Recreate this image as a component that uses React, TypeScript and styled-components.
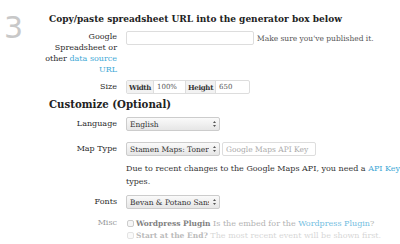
import React from "react";
import styled, { createGlobalStyle } from "styled-components";

const Global = createGlobalStyle`
  html, body {
    margin: 0;
    padding: 0;
    background: #fff;
  }
  body {
    font-family: "DejaVu Serif", "Liberation Serif", serif;
    color: #333;
    font-size: 8px;
  }
`;

const Page = styled.div`
  width: 400px;
  height: 244px;
  overflow: hidden;
  display: flex;
  padding-top: 13px;
  box-sizing: border-box;
`;

const StepNumber = styled.div`
  width: 49px;
  padding-left: 4px;
  box-sizing: border-box;
  font-family: "DejaVu Sans", "Liberation Sans", sans-serif;
  font-size: 30px;
  line-height: 30px;
  color: #c8c8c8;
  flex-shrink: 0;
`;

const Content = styled.div`
  flex: 1;
  display: flex;
  flex-direction: column;
  white-space: nowrap;
`;

const Heading = styled.h2<{ $size?: number; $mt?: number }>`
  margin: ${(p) => p.$mt ?? 0}px 0 0;
  font-size: ${(p) => p.$size ?? 9}px;
  line-height: 12px;
  font-weight: bold;
  color: #222;
`;

const Row = styled.div<{ $mt?: number }>`
  display: flex;
  align-items: flex-start;
  gap: 9px;
  margin-top: ${(p) => p.$mt ?? 0}px;
`;

const Label = styled.div<{ $muted?: boolean; $pt?: number }>`
  width: 80px;
  margin-left: -12px;
  flex-shrink: 0;
  text-align: right;
  line-height: 11px;
  white-space: normal;
  padding-top: ${(p) => p.$pt ?? 0}px;
  color: ${(p) => (p.$muted ? "#999" : "#2a2a2a")};
`;

const Field = styled.div`
  display: flex;
  align-items: center;
  gap: 2px;
`;

const TextInput = styled.input<{ $w: number }>`
  width: ${(p) => p.$w}px;
  height: 14px;
  box-sizing: border-box;
  border: 1px solid #ddd;
  border-radius: 2px;
  padding: 0 3px;
  font: inherit;
  font-size: 7.5px;
  color: #333;
  background: #fff;
  outline: none;
  &::placeholder {
    color: #aaa;
  }
`;

const Hint = styled.span`
  font-size: 7.5px;
  color: #555;
  margin-left: 1px;
`;

const Link = styled.a`
  color: #3fa9d6;
  text-decoration: none;
`;

const Group = styled.div`
  display: flex;
  height: 14px;
  border: 1px solid #ddd;
  border-radius: 2px;
  box-sizing: border-box;
  overflow: hidden;
`;

const GroupLabel = styled.span<{ $w: number }>`
  display: flex;
  align-items: center;
  justify-content: center;
  width: ${(p) => p.$w}px;
  box-sizing: border-box;
  background: #f2f2f2;
  border-right: 1px solid #ddd;
  font-weight: bold;
  font-size: 7px;
  letter-spacing: -0.3px;
  color: #333;
`;

const GroupValue = styled.span<{ $w: number; $border?: boolean }>`
  display: flex;
  align-items: center;
  width: ${(p) => p.$w}px;
  padding: 0 3px;
  font-size: 7px;
  box-sizing: border-box;
  color: #555;
  border-right: ${(p) => (p.$border ? "1px solid #ddd" : "none")};
`;

const SelectBox = styled.div`
  position: relative;
  width: 94px;
  height: 14px;
`;

const Select = styled.select`
  appearance: none;
  -webkit-appearance: none;
  width: 100%;
  height: 100%;
  box-sizing: border-box;
  border: 1px solid #ccc;
  border-radius: 2px;
  padding: 0 10px 0 3px;
  font: inherit;
  font-size: 7.5px;
  color: #333;
  background: linear-gradient(#fafafa, #e6e6e6);
  outline: none;
`;

const Arrows = styled.svg`
  position: absolute;
  right: 4px;
  top: 4px;
  pointer-events: none;
`;

const Note = styled.div`
  line-height: 13px;
  white-space: normal;
  width: 390px;
  font-size: 8px;
  color: #333;
  margin-top: -1px;
`;

const Faint = styled.span`
  color: #ccc;
`;

const CheckList = styled.div`
  display: flex;
  flex-direction: column;
`;

const CheckRow = styled.label<{ $fade: number }>`
  display: flex;
  align-items: center;
  gap: 2px;
  height: 12px;
  opacity: ${(p) => p.$fade};
`;

const Box = styled.span`
  width: 5px;
  height: 5px;
  border: 1px solid #bbb;
  border-radius: 2px;
  background: #f4f4f4;
  margin-left: 1px;
  flex-shrink: 0;
`;

const Strong = styled.span`
  font-weight: bold;
  font-size: 7.5px;
  color: #555;
`;

const Soft = styled.span`
  color: #999;
`;

function Dropdown({ value }: { value: string }) {
  return (
    <SelectBox>
      <Select defaultValue={value}>
        <option>{value}</option>
      </Select>
      <Arrows width="3" height="6" viewBox="0 0 3 6">
        <path d="M1.5 0 L3 2 H0 Z M1.5 6 L3 4 H0 Z" fill="#555" />
      </Arrows>
    </SelectBox>
  );
}

export default function App() {
  const checks = [
    { title: "Wordpress Plugin", text: "Is the embed for the ", link: "Wordpress Plugin", end: "?", fade: 0.75 },
    { title: "Start at the End?", text: "The most recent event will be shown first.", fade: 0.4 },
    { title: "Hash Bookmark", text: "On each slide, a # will be added to the end of the url.", fade: 0.25 },
  ];

  return (
    <>
      <Global />
      <Page>
        <StepNumber>3</StepNumber>
        <Content>
          <Heading>Copy/paste spreadsheet URL into the generator box below</Heading>
          <Row $mt={6}>
            <Label>
              Google Spreadsheet or other <Link href="#">data source URL</Link>
            </Label>
            <Field>
              <TextInput $w={128} type="text" />
              <Hint>Make sure you've published it.</Hint>
            </Field>
          </Row>
          <Row $mt={5}>
            <Label $pt={1}>Size</Label>
            <Group>
              <GroupLabel $w={27}>Width</GroupLabel>
              <GroupValue $w={32} $border>100%</GroupValue>
              <GroupLabel $w={30}>Height</GroupLabel>
              <GroupValue $w={33}>650</GroupValue>
            </Group>
          </Row>
          <Heading $size={10.2} $mt={4}>Customize (Optional)</Heading>
          <Row $mt={7}>
            <Label $pt={1}>Language</Label>
            <Dropdown value="English" />
          </Row>
          <Row $mt={11}>
            <Label $pt={1}>Map Type</Label>
            <Field>
              <Dropdown value="Stamen Maps: Toner" />
              <TextInput $w={94} type="text" placeholder="Google Maps API Key" />
            </Field>
          </Row>
          <Row $mt={7}>
            <Label />
            <Note>
              Due to recent changes to the Google Maps API, you need a <Link href="#">API Key</Link>{" "}
              <Faint>in order to use custom map</Faint> types.
            </Note>
          </Row>
          <Row $mt={7}>
            <Label $pt={1}>Fonts</Label>
            <Dropdown value="Bevan & Potano Sans" />
          </Row>
          <Row $mt={8}>
            <Label $muted>Misc</Label>
            <CheckList>
              {checks.map((c) => (
                <CheckRow key={c.title} $fade={c.fade}>
                  <Box />
                  <span>
                    <Strong>{c.title}</Strong>{" "}
                    <Soft>
                      {c.text}
                      {c.link && <Link href="#">{c.link}</Link>}
                      {c.end}
                    </Soft>
                  </span>
                </CheckRow>
              ))}
            </CheckList>
          </Row>
        </Content>
      </Page>
    </>
  );
}
